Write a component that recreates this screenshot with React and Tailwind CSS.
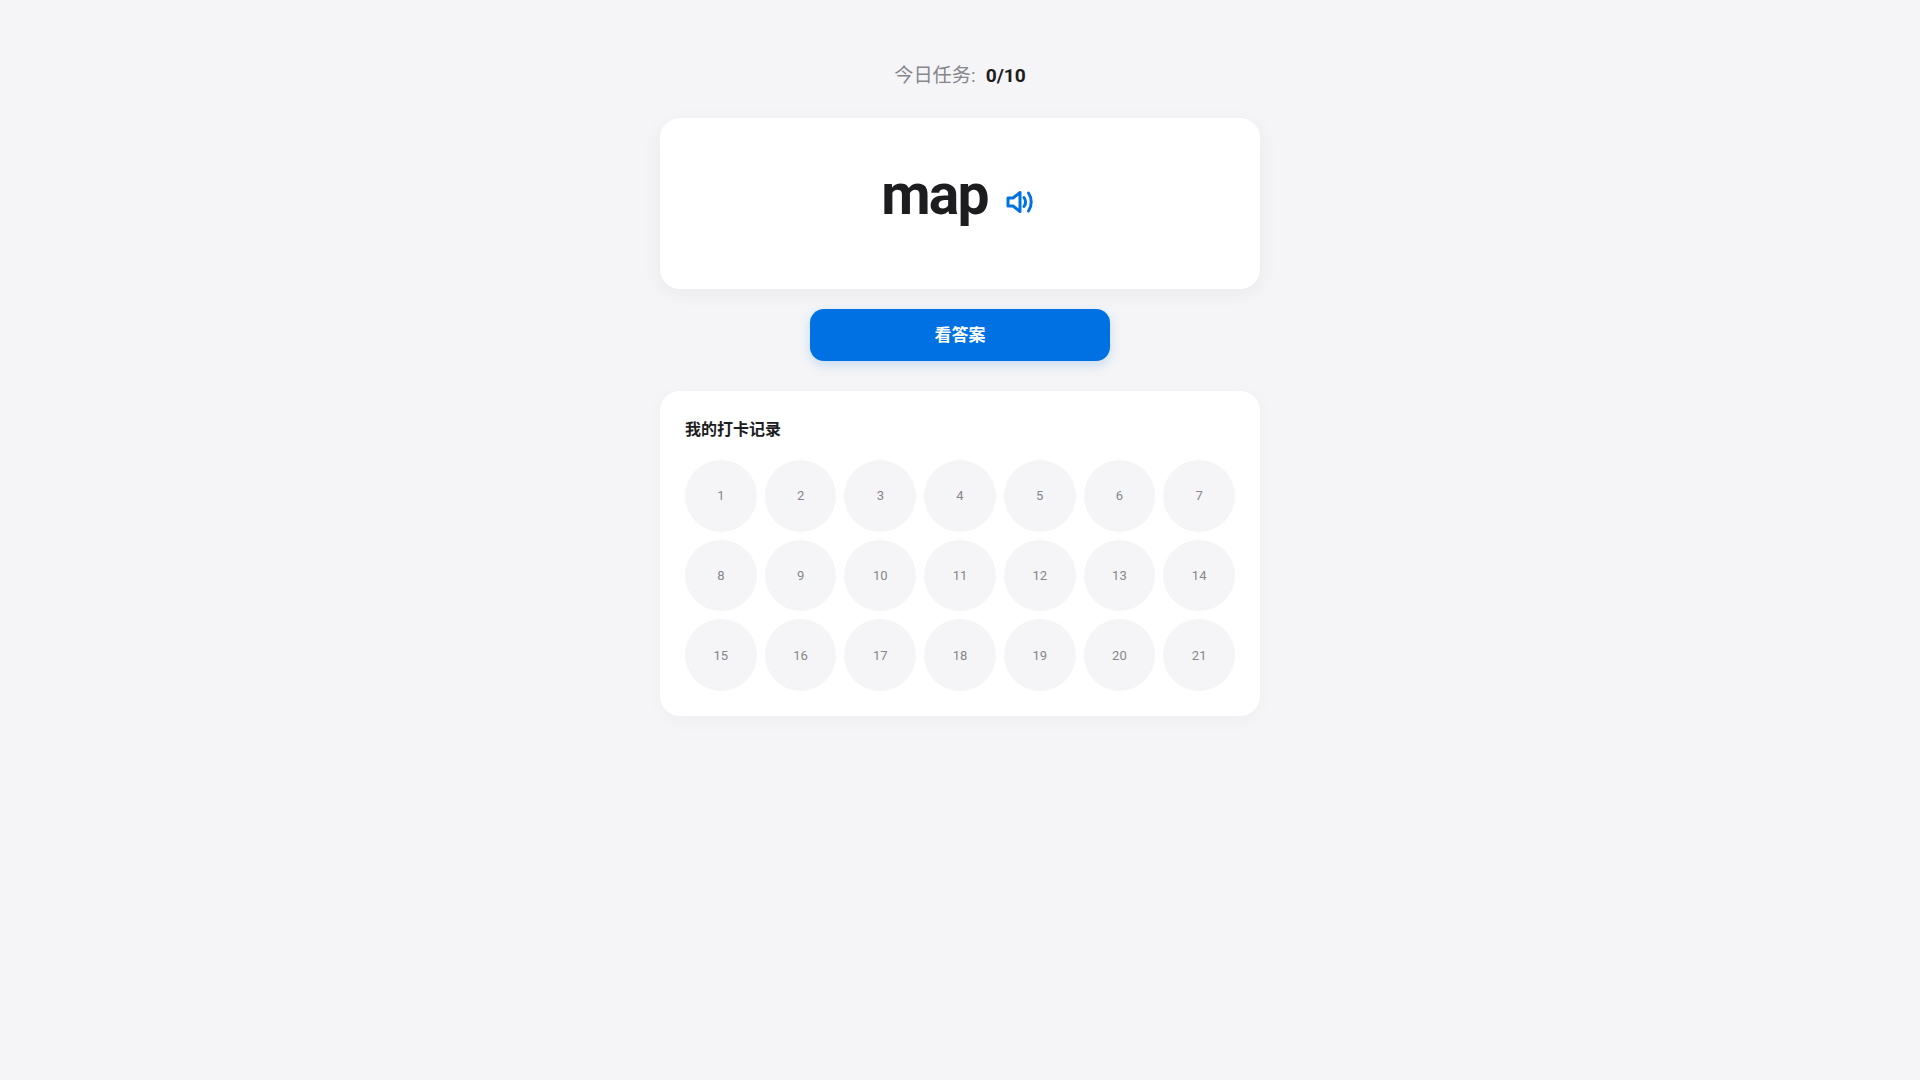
import React from "react";

const days = Array.from({ length: 21 }, (_, i) => i + 1);

function SpeakerIcon() {
  return (
    <svg width="28" height="24" viewBox="0 0 28 24" fill="none" stroke="currentColor" strokeWidth="3">
      <path d="M2 8h5l7-5.5v19L7 16H2z" strokeLinejoin="round" />
      <path d="M18 7.5c1.8 2.6 1.8 6.4 0 9" strokeLinecap="round" />
      <path d="M22.5 3c3.6 5.2 3.6 12.8 0 18" strokeLinecap="round" />
    </svg>
  );
}

function App() {
  return (
    <div className="min-h-screen bg-[#f5f5f7] font-['Roboto','Noto_Sans_CJK_SC',sans-serif] text-[#1d1d1f]">
      <div className="mx-auto flex w-[600px] flex-col items-center pt-[61px]">
        <div className="flex h-[30px] items-center text-[19.2px] text-[#86868b]">
          <span>今日任务:</span>
          <span className="ml-2.5 font-bold text-[#1d1d1f]">0/10</span>
        </div>

        <section className="mt-[27px] h-[171px] w-full rounded-[20px] bg-white pt-[45px] shadow-[0_4px_20px_rgba(0,0,0,0.05)]">
          <div className="mr-[5px] flex items-center justify-center">
            <h1 className="text-[57px] leading-[64px] font-bold tracking-[-1.8px]">map</h1>
            <button className="mt-[13px] ml-[18px] text-[#0071e3]">
              <SpeakerIcon />
            </button>
          </div>
        </section>

        <button className="mt-5 h-[52px] w-[300px] rounded-[14px] bg-[#0071e3] pt-px text-[17px] font-bold text-white shadow-[0_4px_12px_rgba(0,113,227,0.2)]">
          看答案
        </button>

        <section className="mt-[30px] w-full rounded-[20px] bg-white p-[25px] shadow-[0_4px_20px_rgba(0,0,0,0.03)]">
          <h3 className="mb-[17px] pt-px text-[16px] leading-[26px] font-bold">我的打卡记录</h3>
          <div className="grid grid-cols-7 gap-2">
            {days.map((d) => (
              <div
                key={d}
                className="flex aspect-square items-center justify-center rounded-full bg-[#f5f5f7] text-[13px] text-[#86868b]"
              >
                {d}
              </div>
            ))}
          </div>
        </section>
      </div>
    </div>
  );
}

export default App;
